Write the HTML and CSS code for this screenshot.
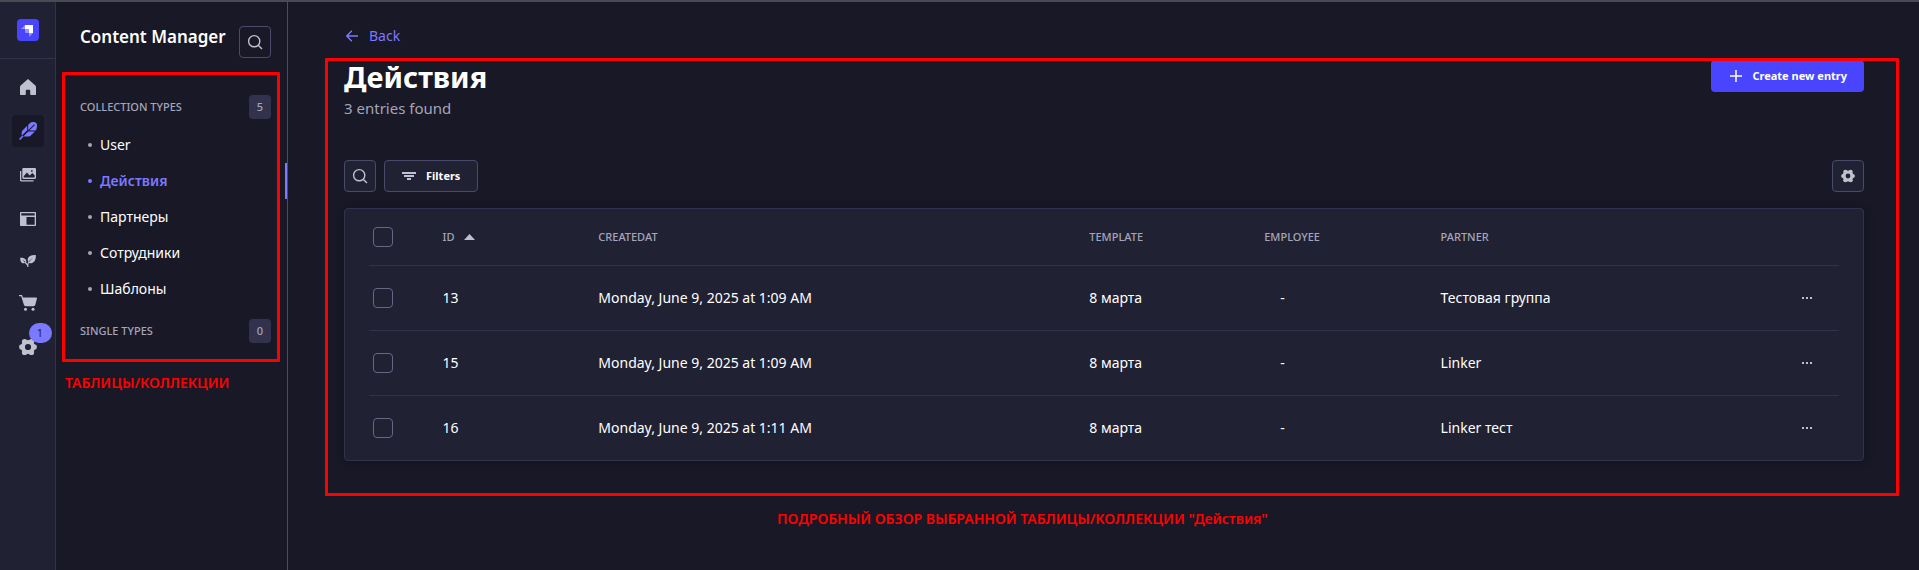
FILE: index.html
```html
<!DOCTYPE html>
<html lang="en">
<head>
<meta charset="utf-8">
<title>Content Manager</title>
<meta name="viewport" content="width=device-width, initial-scale=1">
<link rel="stylesheet" href="styles.css">
</head>
<body>
<div class="app">
  <nav class="rail" aria-label="Main">
    <div class="rail-head">
      <a href="#" class="logo" aria-label="Dashboard">
        <svg viewBox="0 0 22 22" width="22" height="22"><path fill="#fff" d="M8 6h8v8h-4v-4H8z"/><path fill="#9593ff" d="M8 6v4H4zM8 10h4v4H8.500L8 13.500zM12 14h4l-4 4z"/></svg>
      </a>
    </div>
    <ul class="rail-list">
      <li><a href="#" class="rail-link" aria-label="Home"><svg viewBox="0 0 16 16" width="16" height="16"><path d="M8 0 .6 6.600A2 2 0 0 0 0 8v7.200c0 .5.3.8.800.8H5c.5 0 .8-.3.800-.8V11.500c0-.5.3-.8.800-.8h2.800c.5 0 .8.3.800.8v3.700c0 .5.3.8.800.8h4.200c.5 0 .8-.3.800-.8V8a2 2 0 0 0-.6-1.400z"/></svg></a></li>
      <li><a href="#" class="rail-link rail-link-active" aria-label="Content Manager"><svg viewBox="0 0 18 18" width="18" height="18"><path d="M17.300.9C15.500-.3 12.500-.2 10.500 1.500L9.200 2.800v5.400l6-6 .7.700-5.600 5.600h6.600c1.300-2.700 1.500-5.900.4-7.600zM8.200 3.700 3.500 8.400c-.7.700-.9 1.700-.8 2.900v2.400l5.500-5.500zM9.300 9.500l-5 5h5.500c.8 0 1.400-.3 2-.9l4.100-4.100zM3.400 13.600l1 1L1.300 18 0 17z"/></svg></a></li>
      <li><a href="#" class="rail-link" aria-label="Media Library"><svg viewBox="0 0 16 16" width="16" height="16"><path fill-rule="evenodd" d="M3.500 1h11.300c.7 0 1.200.5 1.200 1.200v8.600c0 .7-.5 1.200-1.200 1.200H3.500c-.7 0-1.200-.5-1.200-1.200V2.200C2.300 1.500 2.800 1 3.500 1zM3.700 9.300v1.300h10.900V8.200l-2.300-2.300L9.800 8.400 6.900 5.500zM11 3.200v1.600h1.600V3.200z"/><path d="M0 4h1.300v9.200h12.200v1.300H1.200C.5 14.500 0 14 0 13.300z"/></svg></a></li>
      <li><a href="#" class="rail-link" aria-label="Content-Type Builder"><svg viewBox="0 0 16 16" width="16" height="16"><path fill-rule="evenodd" d="M1 1h14c.6 0 1 .4 1 1v12c0 .6-.4 1-1 1H1c-.6 0-1-.4-1-1V2c0-.6.4-1 1-1zm.3 1.300v2.200h13.400V2.300zM6.500 6v7.700h8.200V6z"/></svg></a></li>
      <li><a href="#" class="rail-link rail-link-short" aria-label="Plugins"><svg viewBox="0 0 16 16" width="16" height="16"><path d="M15.800 2.100c-4.500-.3-7.400 1.200-8 3.700-.3 1.200 0 2.300.5 3.200-.5.6-.7 1.200-.8 1.900L6 9.300c.5-1 .3-2.100-.4-2.900C4.600 5.200 2.700 4.600.2 4.800c-.1 2.500.6 4.300 1.900 5.100.9.500 1.900.5 2.800.2L7.200 12.400V14h1.200v-2.500c0-.6.2-1.100.6-1.600 1 .5 2.100.6 3.200.100 2.600-1 3.900-3.800 3.600-7.900zM2.500 6.800l2.800 2-.6.6zM9 9l-.5-.6 4.600-3.800z"/></svg></a></li>
      <li><a href="#" class="rail-link" aria-label="Marketplace"><svg viewBox="0 0 18 16" width="18" height="16"><path d="M0 0h2.500c.5 0 .8.300.9.700L3.900 2.400H17.300c.5 0 .8.400.7.900l-1.700 6.500c-.2.800-.9 1.400-1.800 1.400H6.700c-.9 0-1.600-.6-1.800-1.400L2.200 1.200H0z"/><circle cx="6.500" cy="14.300" r="1.500"/><circle cx="14" cy="14.300" r="1.500"/></svg></a></li>
      <li><a href="#" class="rail-link" aria-label="Settings, 1 notification"><svg viewBox="0 0 18 18" width="18" height="18"><use href="#gear"/></svg><span class="notice">1</span></a></li>
    </ul>
  </nav>

  <aside class="subnav">
    <header class="subnav-head">
      <h2 class="subnav-title">Content Manager</h2>
      <button type="button" class="icon-button icon-button-plain" aria-label="Search"><svg viewBox="0 0 16 16" width="16" height="16"><use href="#search"/></svg></button>
    </header>
    <section class="group">
      <h3 class="group-head"><span>COLLECTION TYPES</span><span class="count">5</span></h3>
      <ul class="group-list">
        <li><a href="#" class="type-link">User</a></li>
        <li><a href="#" class="type-link type-link-active" aria-current="page">Действия</a></li>
        <li><a href="#" class="type-link">Партнеры</a></li>
        <li><a href="#" class="type-link">Сотрудники</a></li>
        <li><a href="#" class="type-link">Шаблоны</a></li>
      </ul>
    </section>
    <section class="group">
      <h3 class="group-head"><span>SINGLE TYPES</span><span class="count">0</span></h3>
    </section>
    <div class="mark mark-types"></div>
    <p class="mark-label mark-label-types">ТАБЛИЦЫ/КОЛЛЕКЦИИ</p>
  </aside>

  <main class="content">
    <a href="#" class="back"><svg viewBox="0 0 12 12" width="12" height="12"><path d="M12 6H1M5.800.8.800 6l5 5.200" fill="none" stroke="currentColor" stroke-width="1.400"/></svg>Back</a>
    <header class="page-head">
      <div>
        <h1 class="page-title">Действия</h1>
        <p class="page-note">3 entries found</p>
      </div>
      <button type="button" class="create"><svg viewBox="0 0 12 12" width="12" height="12"><path d="M6 0v12M0 6h12" stroke="currentColor" stroke-width="1.500"/></svg>Create new entry</button>
    </header>
    <div class="toolbar">
      <button type="button" class="icon-button" aria-label="Search"><svg viewBox="0 0 16 16" width="16" height="16"><use href="#search"/></svg></button>
      <button type="button" class="filters"><svg viewBox="0 0 14 8" width="14" height="8"><path fill="#c0c0cf" d="M0 0h14v2H0zM2 3h10v2H2zM5 6h4v2H5z"/></svg>Filters</button>
      <button type="button" class="icon-button toolbar-end" aria-label="View settings"><svg viewBox="0 0 18 18" width="14" height="14"><use href="#gear"/></svg></button>
    </div>
    <div class="card">
      <table class="entries">
        <colgroup><col class="col-check"><col class="col-id"><col class="col-date"><col class="col-template"><col class="col-employee"><col class="col-partner"><col class="col-more"></colgroup>
        <thead>
          <tr>
            <th><input type="checkbox" class="tick" aria-label="Select all entries"></th>
            <th><span class="sort">ID<svg viewBox="0 0 11 6" width="11" height="6"><path fill="#c0c0cf" d="M0 6h11L5.500 0z"/></svg></span></th>
            <th>CREATEDAT</th><th>TEMPLATE</th><th>EMPLOYEE</th><th>PARTNER</th><th></th>
          </tr>
        </thead>
        <tbody>
          <tr>
            <td><input type="checkbox" class="tick" aria-label="Select entry 13"></td><td>13</td><td>Monday, June 9, 2025 at 1:09 AM</td><td>8 марта</td><td class="empty">-</td><td>Тестовая группа</td>
            <td><button type="button" class="more" aria-label="Row actions"><svg viewBox="0 0 12 2" width="12" height="2"><use href="#dots"/></svg></button></td>
          </tr>
          <tr>
            <td><input type="checkbox" class="tick" aria-label="Select entry 15"></td><td>15</td><td>Monday, June 9, 2025 at 1:09 AM</td><td>8 марта</td><td class="empty">-</td><td>Linker</td>
            <td><button type="button" class="more" aria-label="Row actions"><svg viewBox="0 0 12 2" width="12" height="2"><use href="#dots"/></svg></button></td>
          </tr>
          <tr>
            <td><input type="checkbox" class="tick" aria-label="Select entry 16"></td><td>16</td><td>Monday, June 9, 2025 at 1:11 AM</td><td>8 марта</td><td class="empty">-</td><td>Linker тест</td>
            <td><button type="button" class="more" aria-label="Row actions"><svg viewBox="0 0 12 2" width="12" height="2"><use href="#dots"/></svg></button></td>
          </tr>
        </tbody>
      </table>
    </div>
    <div class="mark mark-entries"></div>
    <p class="mark-label mark-label-entries">ПОДРОБНЫЙ ОБЗОР ВЫБРАННОЙ ТАБЛИЦЫ/КОЛЛЕКЦИИ "Действия"</p>
  </main>
</div>

<svg class="symbols" width="0" height="0" aria-hidden="true">
  <symbol id="search" viewBox="0 0 16 16"><circle cx="7.200" cy="7.200" r="5.600" fill="none" stroke="#c0c0cf" stroke-width="1.400"/><path d="m11.200 11.200 3.800 3.800" stroke="#c0c0cf" stroke-width="1.400"/></symbol>
  <symbol id="gear" viewBox="0 0 18 18"><g fill="#c0c0cf"><circle cx="5.600" cy="3.600" r="2.700"/><circle cx="12.400" cy="3.600" r="2.700"/><circle cx="15.200" cy="9" r="2.700"/><circle cx="12.400" cy="14.400" r="2.700"/><circle cx="5.600" cy="14.400" r="2.700"/><circle cx="2.800" cy="9" r="2.700"/></g><circle cx="9" cy="9" r="5.100" fill="none" stroke="#c0c0cf" stroke-width="4"/></symbol>
  <symbol id="dots" viewBox="0 0 12 2"><path fill="#c0c0cf" d="M1 0h2v2H1zM5 0h2v2H5zM9 0h2v2H9z"/></symbol>
</svg>
</body>
</html>
```
FILE: styles.css
```css
* {
  box-sizing: border-box;
}

body {
  margin: 0;
  background: #181826;
  color: #ffffff;
  font-family: "Noto Sans", "Open Sans", sans-serif;
  font-size: 14px;
  line-height: 20px;
}

h1,
h2,
h3,
p,
ul {
  margin: 0;
  padding: 0;
}

ul {
  list-style: none;
}

a {
  color: inherit;
  text-decoration: none;
}

button {
  font: inherit;
  color: inherit;
  margin: 0;
  cursor: pointer;
}

svg {
  display: block;
  flex: none;
}

.symbols {
  position: absolute;
}

.app {
  display: flex;
  min-height: 100vh;
  border-top: 2px solid #4a4a55;
}

/* Icon rail */

.rail {
  flex: none;
  width: 56px;
  background: #212134;
  border-right: 1px solid #32324d;
}

.rail-head {
  display: flex;
  justify-content: center;
  padding: 17px 0;
  border-bottom: 1px solid #32324d;
}

.logo {
  border-radius: 4px;
  background: #4945ff;
}

.rail-list {
  display: flex;
  flex-direction: column;
  align-items: center;
  gap: 12px;
  padding: 12px 0;
}

.rail-link {
  position: relative;
  display: flex;
  align-items: center;
  justify-content: center;
  width: 32px;
  height: 32px;
  border-radius: 4px;
  fill: #c0c0cf;
}

.rail-link-short {
  height: 28px;
}

.rail-link-active {
  background: #181826;
  fill: #7b79ff;
}

.notice {
  position: absolute;
  top: -8px;
  left: 17px;
  width: 23px;
  border-radius: 10px;
  background: #7b79ff;
  color: #212134;
  font-size: 11px;
  text-align: center;
}

/* Content type navigation */

.subnav {
  position: relative;
  flex: none;
  width: 232px;
  border-right: 1px solid #4a4a6a;
}

.subnav-head {
  display: flex;
  justify-content: space-between;
  padding: 24px 16px 37px 24px;
}

.subnav-title {
  font-size: 17px;
  font-weight: 600;
  line-height: 22px;
}

.icon-button {
  display: flex;
  align-items: center;
  justify-content: center;
  width: 32px;
  height: 32px;
  padding: 0;
  border: 1px solid #4a4a6a;
  border-radius: 4px;
  background: #212134;
}

.icon-button-plain {
  background: #181826;
}

.group {
  margin-bottom: 12px;
}

.group-head {
  display: flex;
  align-items: center;
  justify-content: space-between;
  padding: 0 16px 0 24px;
  color: #a5a5ba;
  font-size: 11px;
  font-weight: 500;
}

.count {
  min-width: 22px;
  border-radius: 4px;
  background: #32324d;
  line-height: 24px;
  text-align: center;
}

.group-list {
  padding-top: 8px;
}

.type-link {
  display: flex;
  align-items: center;
  gap: 8px;
  height: 36px;
  padding-left: 32px;
}

.type-link::before {
  content: "";
  width: 4px;
  height: 4px;
  border-radius: 50%;
  background: #a5a5ba;
}

.type-link-active {
  border-right: 2px solid #7b79ff;
  color: #7b79ff;
  font-weight: 600;
}

.type-link-active::before {
  background: #7b79ff;
}

/* Entry list */

.content {
  position: relative;
  flex: 1;
  min-width: 0;
  padding: 24px 55px 56px 56px;
}

.back {
  display: inline-flex;
  align-items: center;
  gap: 11px;
  padding-left: 2px;
  color: #7b79ff;
}

.page-head {
  display: flex;
  align-items: flex-start;
  justify-content: space-between;
  padding: 13px 0 40px;
}

.page-title {
  margin-bottom: 2px;
  font-size: 29px;
  font-weight: 700;
  line-height: 34px;
}

.page-note {
  color: #a5a5ba;
  font-size: 15px;
  line-height: 24px;
}

.create {
  display: flex;
  align-items: center;
  gap: 10px;
  height: 32px;
  padding: 0 17px 0 19px;
  border: 0;
  border-radius: 4px;
  background: #4945ff;
  font-size: 11px;
  font-weight: 700;
}

.toolbar {
  display: flex;
  gap: 8px;
  padding-bottom: 16px;
}

.filters {
  display: flex;
  align-items: center;
  gap: 10px;
  height: 32px;
  padding: 0 17px;
  border: 1px solid #4a4a6a;
  border-radius: 4px;
  background: #212134;
  font-size: 11px;
  font-weight: 700;
}

.toolbar-end {
  margin-left: auto;
}

.card {
  padding: 0 24px;
  border: 1px solid #32324d;
  border-radius: 4px;
  background: #212134;
  box-shadow: 1px 1px 10px rgba(3, 3, 5, 0.2);
}

.entries {
  width: 100%;
  border-collapse: separate;
  border-spacing: 0;
  table-layout: fixed;
}

.col-check { width: 5%; }
.col-id { width: 10.6%; }
.col-date { width: 33.4%; }
.col-template { width: 11.9%; }
.col-employee { width: 12%; }
.col-more { width: 38px; }

.entries th,
.entries td {
  height: 65px;
  padding: 0;
  border-bottom: 1px solid #32324d;
  text-align: left;
  vertical-align: middle;
}

.entries th {
  height: 57px;
  color: #a5a5ba;
  font-size: 11px;
  font-weight: 500;
}

.entries tbody tr:last-child td {
  height: 64px;
  border-bottom: 0;
}

.entries .empty {
  padding-left: 16px;
}

.sort {
  display: flex;
  align-items: center;
  gap: 10px;
}

.tick {
  appearance: none;
  display: block;
  width: 20px;
  height: 20px;
  margin: 0 4px;
  border: 1px solid #666687;
  border-radius: 4px;
}

.more {
  display: block;
  padding: 8px 0;
  border: 0;
  background: none;
}

/* Red annotations laid over the page */

.mark {
  position: absolute;
  border: 3px solid #ff0000;
  border-radius: 1px;
  pointer-events: none;
}

.mark-types {
  top: 70px;
  right: 7px;
  left: 6px;
  height: 290px;
}

.mark-entries {
  top: 56px;
  right: 20px;
  left: 37px;
  height: 438px;
}

.mark-label {
  position: absolute;
  color: #ff0000;
  font-weight: 600;
  white-space: nowrap;
}

.mark-label-types {
  top: 371px;
  left: 9px;
}

.mark-label-entries {
  top: 507px;
  left: 489px;
}
```
